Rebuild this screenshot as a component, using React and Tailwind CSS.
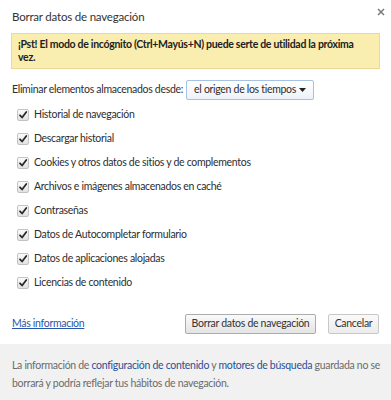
import React from 'react';

const ITEMS = [
  'Historial de navegación',
  'Descargar historial',
  'Cookies y otros datos de sitios y de complementos',
  'Archivos e imágenes almacenados en caché',
  'Contraseñas',
  'Datos de Autocompletar formulario',
  'Datos de aplicaciones alojadas',
  'Licencias de contenido',
];

function CheckBox() {
  return (
    <span className="w-[12px] h-[12px] shrink-0 rounded-[2px] border border-[#c2c2c2] bg-gradient-to-b from-[#fbfbfb] to-[#e2e2e2] flex items-center justify-center">
      <svg width="10" height="10" viewBox="0 0 10 10">
        <path d="M2 5.3 L4.1 7.5 L8.3 2" fill="none" stroke="#2b2b2b" strokeWidth="1.8" strokeLinecap="round" strokeLinejoin="round" />
      </svg>
    </span>
  );
}

export default function App() {
  return (
    <div className="relative w-[391px] h-[400px] bg-white overflow-hidden font-['Lato','Open_Sans',sans-serif] text-[10.5px] tracking-[-0.3px] text-[#2e2e2e]">
      {/* close */}
      <button className="absolute right-[4px] top-[6px] w-[12px] h-[12px] flex items-center justify-center">
        <svg width="8" height="8" viewBox="0 0 8 8">
          <path d="M1 1 L7 7 M7 1 L1 7" stroke="#7a7a7a" strokeWidth="1.5" />
        </svg>
      </button>

      <div className="px-3 pt-[9px] text-[11.5px] tracking-[-0.2px] leading-[16px] text-[#333]">Borrar datos de navegación</div>

      <div className="mx-[11px] mt-[8px] border border-[#ecd994] bg-[#f9eeb0] px-[6px] py-[4px] font-bold text-[#222] leading-[13px]">
        <span className="whitespace-nowrap">¡Pst! El modo de incógnito (Ctrl+Mayús+N) puede serte de utilidad la próxima</span>
        <br />
        vez.
      </div>

      <div className="mt-[11px] px-3 flex items-center gap-[3px]">
        <span className="whitespace-nowrap">Eliminar elementos almacenados desde:</span>
        <div className="w-[128px] h-[20px] shrink-0 border border-[#a6c2e2] rounded-[2px] bg-gradient-to-b from-white to-[#eef2f8] flex items-center justify-between pl-[7px] pr-[7px]">
          <span className="whitespace-nowrap">el origen de los tiempos</span>
          <svg width="7" height="4" viewBox="0 0 7 4">
            <path d="M0 0 H7 L3.5 4 Z" fill="#222" />
          </svg>
        </div>
      </div>

      <div className="mt-[3px] flex flex-col">
        {ITEMS.map((label) => (
          <div key={label} className="h-[24px] flex items-center pl-[17px] gap-[5px]">
            <CheckBox />
            <span>{label}</span>
          </div>
        ))}
      </div>

      <div className="mt-[19px] px-3 flex items-center justify-between h-[20px]">
        <a href="#" className="text-[#2a55a8] underline">Más información</a>
        <div className="flex gap-[12px]">
          <button className="h-[20px] w-[131px] whitespace-nowrap border border-[#acacac] rounded-[2px] bg-gradient-to-b from-[#fafafa] to-[#e4e4e4] text-[#333]">
            Borrar datos de navegación
          </button>
          <button className="h-[20px] w-[51px] whitespace-nowrap border border-[#c8c8c8] rounded-[2px] bg-gradient-to-b from-[#fafafa] to-[#ececec] text-[#333]">
            Cancelar
          </button>
        </div>
      </div>

      <div className="mt-[10px] h-[56px] bg-[#f1f1f1] px-3 pt-[12px] leading-[18px] text-[#6b6b6b]">
        <span className="whitespace-nowrap">
          La información de <span className="text-[#2a4f96]">configuración de contenido</span> y{' '}
          <span className="text-[#2a4f96]">motores de búsqueda</span> guardada no se
        </span>
        <br />
        borrará y podría reflejar tus hábitos de navegación.
      </div>
    </div>
  );
}
